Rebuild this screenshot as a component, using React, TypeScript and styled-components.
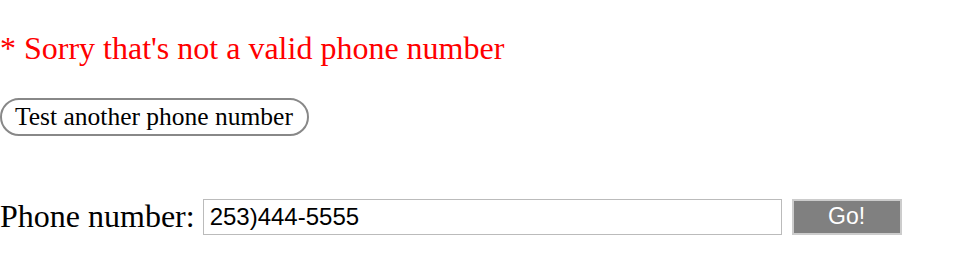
import React from 'react';
import styled, { createGlobalStyle } from 'styled-components';

const Global = createGlobalStyle`
  html, body {
    margin: 0;
    padding: 0;
    background: #fff;
  }
`;

const Page = styled.div`
  display: flex;
  flex-direction: column;
  align-items: flex-start;
  padding-top: 28px;
  font-family: 'Liberation Serif', 'Times New Roman', serif;
`;

const Error = styled.div`
  color: #ff0000;
  font-size: 32px;
  line-height: 40px;
`;

const ResetButton = styled.button`
  margin-top: 30px;
  height: 38px;
  padding: 0 14px 0 13px;
  border: 2px solid #888;
  border-radius: 19px;
  background: #fff;
  color: #000;
  font-family: 'Liberation Serif', 'Times New Roman', serif;
  font-size: 25.5px;
`;

const Form = styled.form`
  display: flex;
  align-items: center;
  margin-top: 62px;
`;

const Label = styled.label`
  font-size: 32px;
  margin-right: 8px;
`;

const PhoneInput = styled.input`
  width: 579px;
  height: 36px;
  box-sizing: border-box;
  border: 1px solid #bbb;
  padding: 0 6px;
  font-family: 'Liberation Sans', Arial, sans-serif;
  font-size: 24px;
  color: #000;
`;

const GoButton = styled.button`
  margin-left: 10px;
  width: 110px;
  height: 36px;
  box-sizing: border-box;
  border: 2px solid #ccc;
  background: #808080;
  color: #fff;
  font-family: 'Liberation Sans', Arial, sans-serif;
  font-size: 23px;
`;

export default function App() {
  return (
    <>
      <Global />
      <Page>
        <Error>* Sorry that's not a valid phone number</Error>
        <ResetButton type="button">Test another phone number</ResetButton>
        <Form onSubmit={(e) => e.preventDefault()}>
          <Label htmlFor="phone">Phone number:</Label>
          <PhoneInput id="phone" defaultValue="253)444-5555" />
          <GoButton type="submit">Go!</GoButton>
        </Form>
      </Page>
    </>
  );
}
